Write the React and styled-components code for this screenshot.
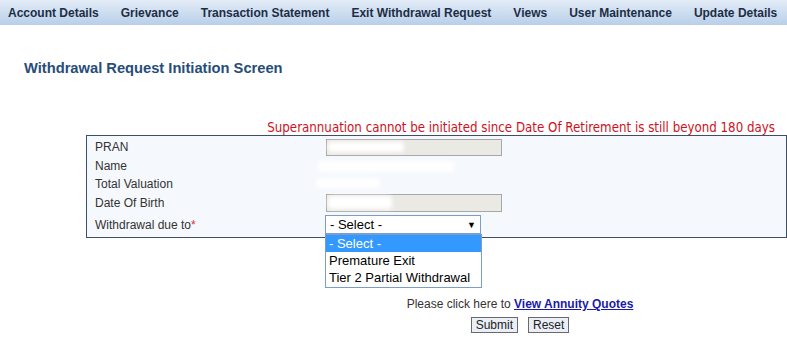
import React from 'react';
import styled, { createGlobalStyle } from 'styled-components';

const GlobalStyle = createGlobalStyle`
  body {
    margin: 0;
    background: #fff;
    font-family: 'Liberation Sans', Arial, sans-serif;
  }
`;

const Page = styled.div`
  width: 787px;
  height: 342px;
  overflow: hidden;
`;

const NavBar = styled.div`
  display: flex;
  gap: 22px;
  height: 25px;
  align-items: center;
  padding-left: 8px;
  background: linear-gradient(#e3ecf7, #b8cfe9);
  white-space: nowrap;
`;

const NavItem = styled.span`
  font-size: 12px;
  font-weight: bold;
  color: #1c2e45;
`;

const Title = styled.h2`
  margin: 35px 0 0 24px;
  font-size: 14.7px;
  font-weight: bold;
  color: #264d7a;
  line-height: 16px;
`;

const Section = styled.div`
  margin: 44px 0 0 86px;
  position: relative;
`;

const ErrorText = styled.div`
  text-align: right;
  padding-right: 12px;
  font-family: 'DejaVu Sans Condensed', 'DejaVu Sans', sans-serif;
  font-size: 13.2px;
  line-height: 15px;
  color: #d0101c;
`;

const FormBox = styled.div`
  display: grid;
  grid-template-columns: 231px 1fr;
  grid-template-rows: 20px 18px 17px 21px 23px;
  padding: 1px 0 1px 8px;
  border: 1px solid #3d5068;
  background: #f5f8fd;
  font-size: 12px;
  color: #333;
`;

const Label = styled.div`
  display: flex;
  align-items: center;
`;

const Required = styled.span`
  color: #e03030;
`;

const Cell = styled.div`
  display: flex;
  align-items: center;
  position: relative;
`;

const ReadOnlyInput = styled.div`
  width: 174px;
  height: ${(p) => p.$h}px;
  background: #ebe9e4;
  border: 1px solid #a8a8a8;
  position: relative;
`;

const Redact = styled.div`
  position: absolute;
  left: ${(p) => p.$x}px;
  top: ${(p) => p.$y}px;
  width: ${(p) => p.$w}px;
  height: ${(p) => p.$h}px;
  background: #fff;
  filter: blur(2px);
  border-radius: 3px;
`;

const SelectBox = styled.div`
  width: 146px;
  height: 17px;
  border: 1px solid #7b9dc9;
  background: #fff;
  display: flex;
  align-items: center;
  justify-content: space-between;
  padding: 0 4px;
  box-sizing: content-box;
  font-size: 13px;
  color: #000;
  margin-left: -1px;
`;

const Arrow = styled.span`
  font-size: 9px;
`;

const DropList = styled.div`
  position: absolute;
  left: -1px;
  top: 21px;
  width: 155px;
  border: 1px solid #7b9dc9;
  background: #fff;
  z-index: 2;
  padding-bottom: 1px;
`;

const Option = styled.div`
  height: 17px;
  line-height: 17px;
  padding-left: 3px;
  font-size: 13px;
  color: ${(p) => (p.$active ? '#fff' : '#000')};
  background: ${(p) => (p.$active ? '#3399ff' : '#fff')};
`;

const Footer = styled.div`
  display: flex;
  flex-direction: column;
  align-items: center;
  margin: 59px 0 0 370px;
  width: 300px;
  font-size: 12px;
  color: #333;
`;

const Link = styled.a`
  color: #1a1aa8;
  font-weight: bold;
  text-decoration: underline;
`;

const Buttons = styled.div`
  display: flex;
  gap: 10px;
  margin-top: 6px;
`;

const Button = styled.button`
  font-family: 'Liberation Sans', Arial, sans-serif;
  font-size: 12px;
  color: #222;
  height: 16px;
  padding: 0 4px;
  border: 1px solid #6a6a6a;
  background: #eaeef7;
  line-height: 14px;
`;

const menu = [
  'Account Details',
  'Grievance',
  'Transaction Statement',
  'Exit Withdrawal Request',
  'Views',
  'User Maintenance',
  'Update Details',
];

export default function App() {
  return (
    <Page>
      <GlobalStyle />
      <NavBar>
        {menu.map((m) => (
          <NavItem key={m}>{m}</NavItem>
        ))}
      </NavBar>
      <Title>Withdrawal Request Initiation Screen</Title>
      <Section>
        <ErrorText>
          Superannuation cannot be initiated since Date Of Retirement is still beyond 180 days
        </ErrorText>
        <FormBox>
          <Label>PRAN</Label>
          <Cell>
            <ReadOnlyInput $h={15}>
              <Redact $x={1} $y={2} $w={76} $h={10} />
            </ReadOnlyInput>
          </Cell>
          <Label>Name</Label>
          <Cell>
            <Redact $x={-8} $y={4} $w={136} $h={11} />
          </Cell>
          <Label>Total Valuation</Label>
          <Cell>
            <Redact $x={-10} $y={3} $w={64} $h={10} />
          </Cell>
          <Label>Date Of Birth</Label>
          <Cell>
            <ReadOnlyInput $h={16}>
              <Redact $x={1} $y={1} $w={64} $h={13} />
            </ReadOnlyInput>
          </Cell>
          <Label>
            Withdrawal due to<Required>*</Required>
          </Label>
          <Cell>
            <SelectBox>
              <span>- Select -</span>
              <Arrow>▼</Arrow>
            </SelectBox>
            <DropList>
              <Option $active>- Select -</Option>
              <Option>Premature Exit</Option>
              <Option>Tier 2 Partial Withdrawal</Option>
            </DropList>
          </Cell>
        </FormBox>
      </Section>
      <Footer>
        <div>
          Please click here to <Link href="#">View Annuity Quotes</Link>
        </div>
        <Buttons>
          <Button>Submit</Button>
          <Button>Reset</Button>
        </Buttons>
      </Footer>
    </Page>
  );
}
